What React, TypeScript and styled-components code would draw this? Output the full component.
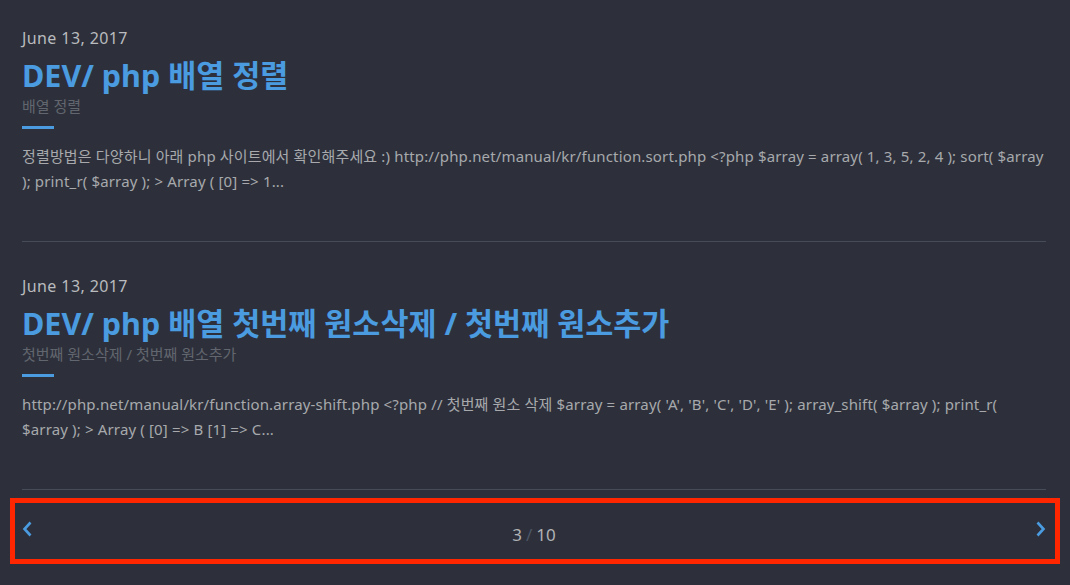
import styled, { createGlobalStyle } from "styled-components";

const GlobalStyle = createGlobalStyle`
  html, body {
    margin: 0;
    padding: 0;
    background: #2d303b;
  }
  body {
    font-family: "Noto Sans", "Noto Sans CJK KR", sans-serif;
  }
`;

const Container = styled.div`
  width: 1070px;
  height: 585px;
  box-sizing: border-box;
  padding: 22px 24px 0 22px;
  background: #2d303b;
  overflow: hidden;
`;

const Post = styled.article`
  padding: 6px 0 47px;
  border-bottom: 1px solid #464b59;
  & + & {
    margin-top: 28px;
  }
`;

const PostDate = styled.div`
  font-size: 16px;
  line-height: 20px;
  letter-spacing: 0.4px;
  color: #b9bbbe;
`;

const Title = styled.h2`
  margin: 8px 0 0;
  font-size: 30.5px;
  line-height: 38px;
  font-weight: 700;
  color: #4a9be0;
`;

const Subtitle = styled.div`
  margin-top: 2px;
  font-size: 15px;
  line-height: 20px;
  color: #62666e;
`;

const Bar = styled.div`
  width: 32px;
  height: 3px;
  margin-top: 10px;
  background: #4a9be0;
`;

const Excerpt = styled.p`
  margin: 15px 0 0;
  font-size: 15px;
  line-height: 25px;
  letter-spacing: 0.15px;
  color: #a7a9ac;
`;

const Pager = styled.nav`
  margin: 8px -14px 0 -12px;
  height: 56px;
  border: 5px solid #ff2600;
  display: flex;
  align-items: center;
  justify-content: space-between;
  padding: 0 9px 0 7px;
`;

const Arrow = styled.svg`
  width: 10px;
  height: 16px;
  margin-top: -4px;
`;

const PageCount = styled.div`
  font-size: 17px;
  color: #b0b2b5;
  margin-top: 6px;
  span {
    color: #4b5566;
    margin: 0 4px;
  }
`;

const posts = [
  {
    date: "June 13, 2017",
    title: "DEV/ php 배열 정렬",
    sub: "배열 정렬",
    text: "정렬방법은 다양하니 아래 php 사이트에서 확인해주세요 :) http://php.net/manual/kr/function.sort.php <?php $array = array( 1, 3, 5, 2, 4 ); sort( $array ); print_r( $array ); > Array ( [0] => 1...",
  },
  {
    date: "June 13, 2017",
    title: "DEV/ php 배열 첫번째 원소삭제 / 첫번째 원소추가",
    sub: "첫번째 원소삭제 / 첫번째 원소추가",
    text: "http://php.net/manual/kr/function.array-shift.php <?php // 첫번째 원소 삭제 $array = array( 'A', 'B', 'C', 'D', 'E' ); array_shift( $array ); print_r( $array ); > Array ( [0] => B [1] => C...",
  },
];

function App() {
  return (
    <Container>
      <GlobalStyle />
      {posts.map((p, i) => (
        <Post key={i}>
          <PostDate>{p.date}</PostDate>
          <Title>{p.title}</Title>
          <Subtitle>{p.sub}</Subtitle>
          <Bar />
          <Excerpt>{p.text}</Excerpt>
        </Post>
      ))}
      <Pager>
        <Arrow viewBox="0 0 10 16">
          <path d="M8.5 1.5 L2.5 8 L8.5 14.5" fill="none" stroke="#4a9be0" strokeWidth="2.6" />
        </Arrow>
        <PageCount>
          3<span>/</span>10
        </PageCount>
        <Arrow viewBox="0 0 10 16">
          <path d="M1.5 1.5 L7.5 8 L1.5 14.5" fill="none" stroke="#4a9be0" strokeWidth="2.6" />
        </Arrow>
      </Pager>
    </Container>
  );
}

export default App;
